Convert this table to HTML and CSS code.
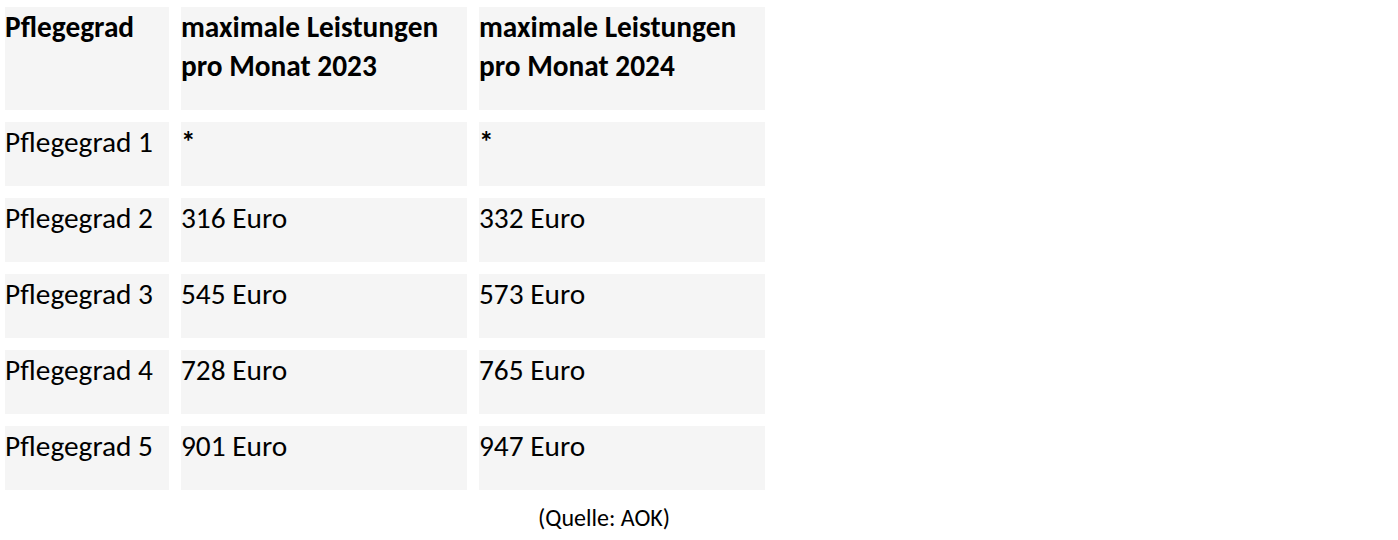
FILE: index.html
```html
<!DOCTYPE html>
<html lang="de">
<head>
<meta charset="utf-8">
<title>Pflegegrad</title>
<link rel="stylesheet" href="styles.css">
</head>
<body>
<div class="wrap">
  <div class="table">
    <div class="cell head">Pflegegrad</div>
    <div class="cell head">maximale Leistungen<br>pro Monat 2023</div>
    <div class="cell head">maximale Leistungen<br>pro Monat 2024</div>

    <div class="cell">Pflegegrad 1</div>
    <div class="cell star">*</div>
    <div class="cell star">*</div>

    <div class="cell">Pflegegrad 2</div>
    <div class="cell">316 Euro</div>
    <div class="cell">332 Euro</div>

    <div class="cell">Pflegegrad 3</div>
    <div class="cell">545 Euro</div>
    <div class="cell">573 Euro</div>

    <div class="cell">Pflegegrad 4</div>
    <div class="cell">728 Euro</div>
    <div class="cell">765 Euro</div>

    <div class="cell">Pflegegrad 5</div>
    <div class="cell">901 Euro</div>
    <div class="cell">947 Euro</div>
  </div>
  <p class="source">(Quelle: AOK)</p>
</div>
</body>
</html>
```
FILE: styles.css
```css
html, body {
  margin: 0;
  padding: 0;
  background: #ffffff;
}
body {
  font-family: Carlito, "Open Sans", "Liberation Sans", sans-serif;
  color: #000;
}
.wrap {
  padding: 7px 0 0 5px;
}
.table {
  display: grid;
  grid-template-columns: 164px 286px 286px;
  grid-template-rows: 103px repeat(5, 64px);
  gap: 12px;
  width: 760px;
}
.cell {
  background: #f5f5f5;
  font-size: 29.33px;
  line-height: 39px;
  padding-top: 1px;
}
.head {
  font-weight: 700;
}
.star {
  font-weight: 700;
}
.source {
  margin: 13px 0 0 533px;
  font-size: 24px;
  line-height: 30px;
}
```
